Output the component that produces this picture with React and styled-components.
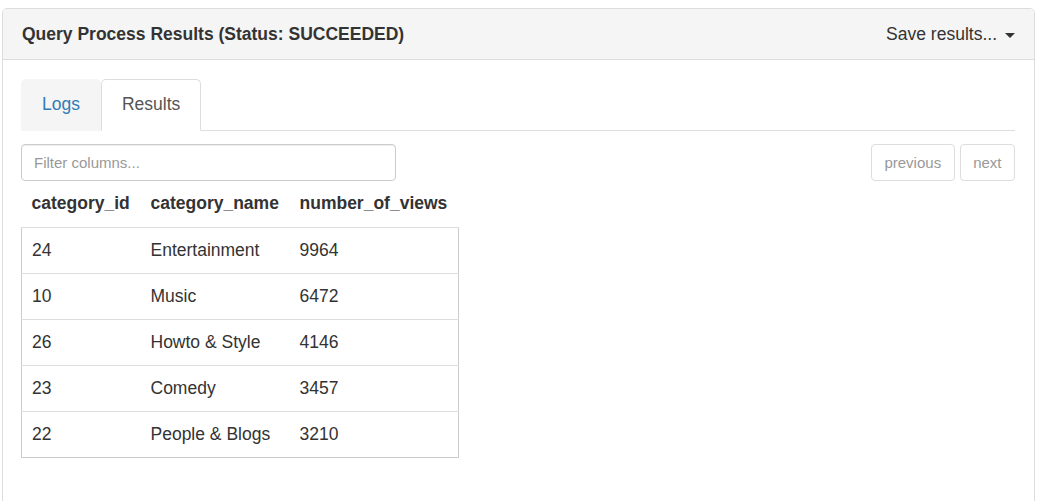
import React from "react";
import styled, { createGlobalStyle } from "styled-components";

const Global = createGlobalStyle`
  html, body { margin: 0; padding: 0; background: #fff; }
  body {
    font-family: "Liberation Sans", Arial, Helvetica, sans-serif;
    font-size: 17.5px;
    line-height: 25px;
    color: #333;
  }
  * { box-sizing: border-box; }
`;

const Page = styled.div`
  padding: 8px 3px 0 2px;
  height: 501px;
  overflow: hidden;
`;

const Panel = styled.div`
  border: 1px solid #ddd;
  border-radius: 5px;
  background: #fff;
  min-height: 520px;
`;

const PanelHeading = styled.div`
  display: flex;
  align-items: center;
  justify-content: space-between;
  height: 51px;
  padding: 0 19px;
  background: #f5f5f5;
  border-bottom: 1px solid #ddd;
  border-radius: 4px 4px 0 0;
`;

const Title = styled.h3`
  margin: 0;
  font-size: 17.5px;
  font-weight: bold;
  color: #333;
  line-height: 25px;
`;

const SaveButton = styled.button`
  display: flex;
  align-items: center;
  gap: 8px;
  border: none;
  background: transparent;
  padding: 0;
  font-family: inherit;
  font-size: 17.5px;
  color: #333;
  cursor: pointer;
`;

const Caret = styled.span`
  display: inline-block;
  width: 0;
  height: 0;
  border-left: 5px solid transparent;
  border-right: 5px solid transparent;
  border-top: 5px solid #333;
  margin-top: 2px;
`;

const PanelBody = styled.div`
  padding: 19px 19px 40px 18px;
`;

const Tabs = styled.ul`
  display: flex;
  list-style: none;
  margin: 0;
  padding: 0;
  border-bottom: 1px solid #ddd;
`;

const Tab = styled.li`
  margin-bottom: -1px;
  a {
    display: block;
    height: 52px;
    padding: 12px 20px;
    line-height: 25px;
    font-size: 17.5px;
    text-decoration: none;
    border: 1px solid ${(p) => (p.$active ? "#ddd" : "transparent")};
    border-bottom-color: ${(p) => (p.$active ? "#fff" : "transparent")};
    border-radius: 5px 5px 0 0;
    background: ${(p) => (p.$active ? "#fff" : "#f5f5f5")};
    color: ${(p) => (p.$active ? "#555" : "#337ab7")};
  }
`;

const Toolbar = styled.div`
  display: flex;
  justify-content: space-between;
  align-items: center;
  margin-top: 13px;
`;

const FilterInput = styled.input`
  width: 375px;
  height: 37px;
  padding: 6px 12px;
  font-family: inherit;
  font-size: 15px;
  color: #555;
  border: 1px solid #ccc;
  border-radius: 4px;
  box-shadow: inset 0 1px 1px rgba(0, 0, 0, 0.075);
  outline: none;
  &::placeholder { color: #999; }
`;

const Pager = styled.div`
  display: flex;
  gap: 5px;
`;

const PagerButton = styled.button`
  height: 37px;
  padding: 0 12.5px;
  font-family: inherit;
  font-size: 15px;
  color: #999;
  background: #fff;
  border: 1px solid #ddd;
  border-radius: 4px;
  cursor: not-allowed;
`;

const Table = styled.table`
  border-collapse: collapse;
  table-layout: fixed;
  width: 437px;
  font-size: 17.5px;
`;

const Th = styled.th`
  text-align: left;
  font-weight: bold;
  padding: 10px 10px 11px;
  line-height: 25px;
  width: ${(p) => p.$w}px;
  white-space: nowrap;
`;

const Tbody = styled.tbody`
  border: 1px solid #ccc;
`;

const Tr = styled.tr`
  border-top: 1px solid #ddd;
`;

const Td = styled.td`
  padding: 10px;
  line-height: 25px;
  white-space: nowrap;
`;

const rows = [
  ["24", "Entertainment", "9964"],
  ["10", "Music", "6472"],
  ["26", "Howto & Style", "4146"],
  ["23", "Comedy", "3457"],
  ["22", "People & Blogs", "3210"],
];

export default function App() {
  return (
    <>
      <Global />
      <Page>
        <Panel>
          <PanelHeading>
            <Title>Query Process Results (Status: SUCCEEDED)</Title>
            <SaveButton>
              Save results... <Caret />
            </SaveButton>
          </PanelHeading>
          <PanelBody>
            <Tabs>
              <Tab>
                <a href="#logs">Logs</a>
              </Tab>
              <Tab $active>
                <a href="#results">Results</a>
              </Tab>
            </Tabs>
            <Toolbar>
              <FilterInput placeholder="Filter columns..." />
              <Pager>
                <PagerButton>previous</PagerButton>
                <PagerButton>next</PagerButton>
              </Pager>
            </Toolbar>
            <Table>
              <thead>
                <tr>
                  <Th $w={119}>category_id</Th>
                  <Th $w={149}>category_name</Th>
                  <Th $w={169}>number_of_views</Th>
                </tr>
              </thead>
              <Tbody>
                {rows.map((r) => (
                  <Tr key={r[0]}>
                    {r.map((c, i) => (
                      <Td key={i}>{c}</Td>
                    ))}
                  </Tr>
                ))}
              </Tbody>
            </Table>
          </PanelBody>
        </Panel>
      </Page>
    </>
  );
}
